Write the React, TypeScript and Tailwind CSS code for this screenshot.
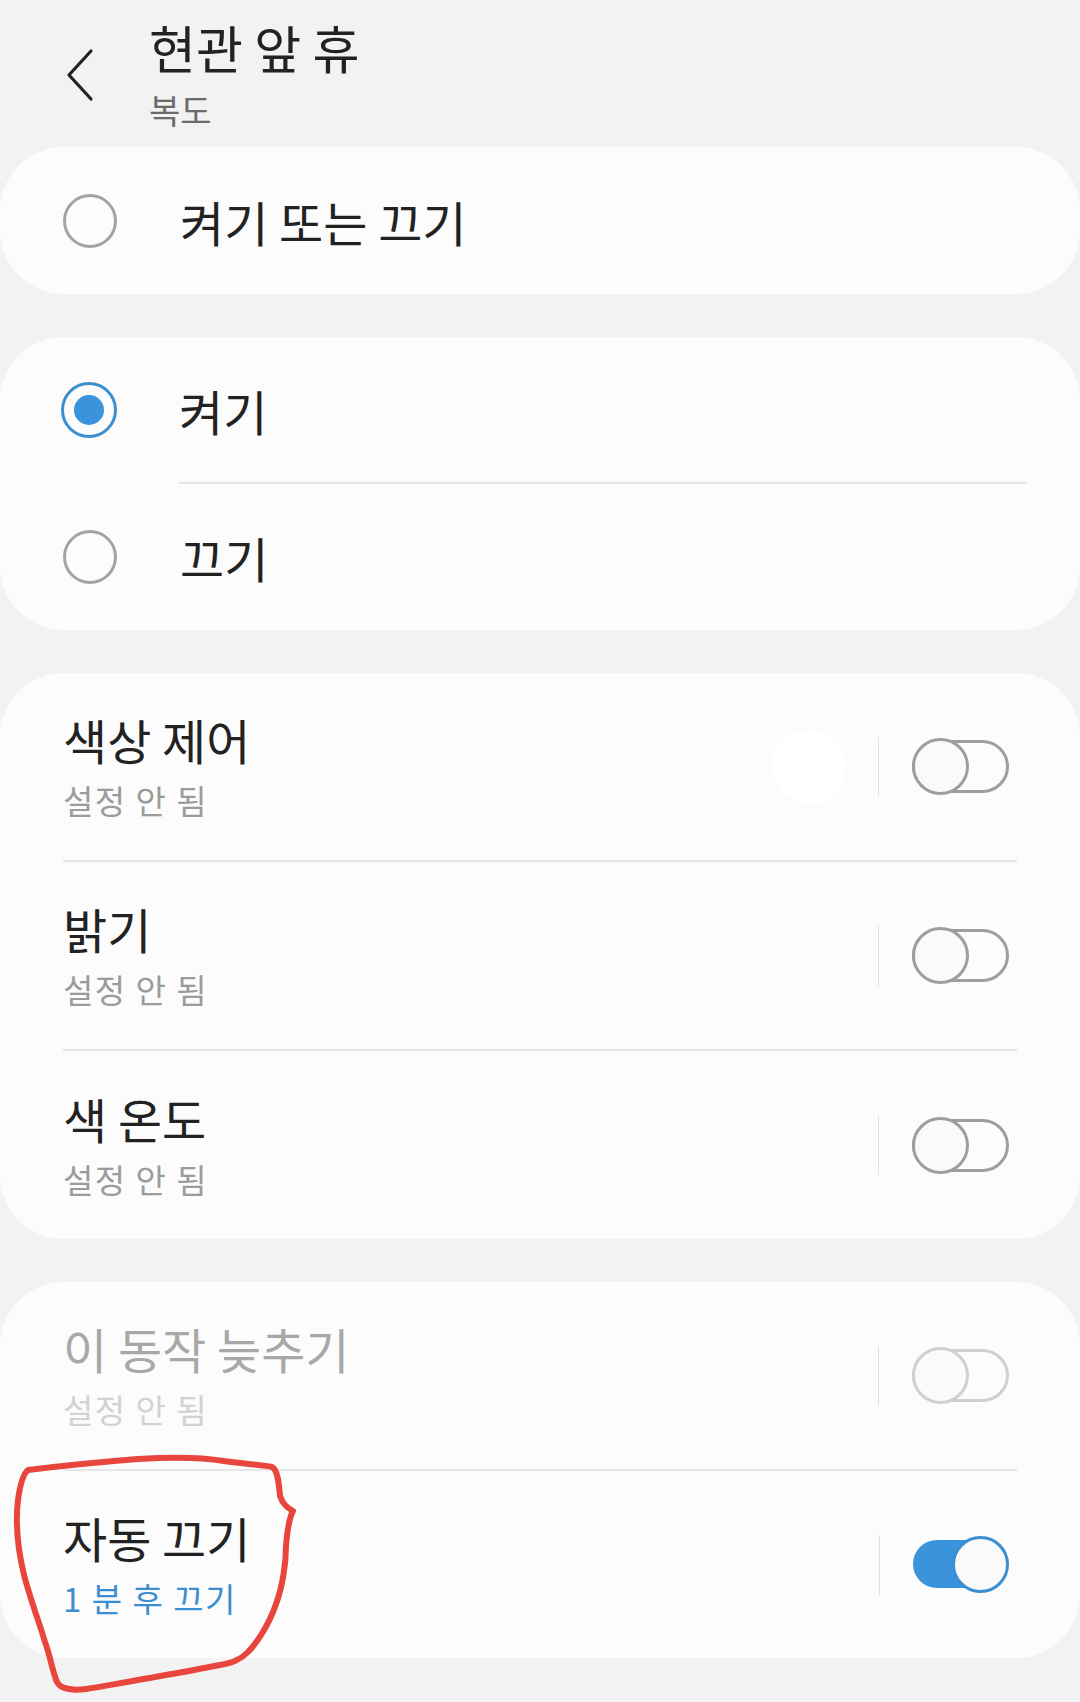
import React from "react";

const font = "font-['Noto_Sans_CJK_KR','Noto_Sans',sans-serif]";

type RadioProps = { checked?: boolean };

const Radio: React.FC<RadioProps> = ({ checked }) => {
  if (checked) {
    return (
      <div className="w-[56px] h-[56px] rounded-full border-[3px] border-[#3b8fd0] flex items-center justify-center shrink-0">
        <div className="w-[30px] h-[30px] rounded-full bg-[#3b93db]" />
      </div>
    );
  }
  return <div className="w-[54px] h-[54px] rounded-full border-[3px] border-[#a3a3a3] shrink-0 mx-[1px]" />;
};

type ToggleProps = { on?: boolean; disabled?: boolean };

const Toggle: React.FC<ToggleProps> = ({ on, disabled }) => {
  if (on) {
    return (
      <div className="relative w-[96px] h-[57px] shrink-0">
        <div className="absolute left-0 right-[8px] top-[4px] h-[48px] rounded-full bg-[#3b93db]" />
        <div className="absolute right-0 top-0 w-[57px] h-[57px] rounded-full border-[3px] border-[#3b8fd0] bg-[#fafafa]" />
      </div>
    );
  }
  const line = disabled ? "border-[#d0d0d0]" : "border-[#9e9e9e]";
  return (
    <div className="relative w-[97px] h-[57px] shrink-0">
      <div className={`absolute left-0 right-0 top-[2px] h-[53px] rounded-full border-[3px] ${line}`} />
      <div className={`absolute left-0 top-0 w-[57px] h-[57px] rounded-full border-[3px] bg-[#fafafa] ${line}`} />
    </div>
  );
};

type RowProps = {
  title: string;
  sub: string;
  on?: boolean;
  disabled?: boolean;
  ripple?: boolean;
  height: string;
};

const SwitchRow: React.FC<RowProps> = ({ title, sub, on, disabled, ripple, height }) => {
  const titleColor = disabled ? "text-[#a8a8a8]" : "text-[#222222]";
  const subColor = on ? "text-[#3b8fd0]" : disabled ? "text-[#d2d2d2]" : "text-[#9b9b9b]";
  return (
    <div className={`flex items-center pl-[63px] pr-[71px] ${height}`}>
      <div className="flex-1 flex flex-col gap-[15px]">
        <span className={`text-[48px] leading-[52px] ${titleColor}`}>{title}</span>
        <span className={`text-[33px] leading-[40px] tracking-[1.5px] ${subColor}`}>{sub}</span>
      </div>
      {ripple && <div className="w-[74px] h-[74px] rounded-full bg-white mr-[32px]" />}
      <div className="w-px h-[60px] bg-[#e2e2e2] mr-[33px]" />
      <Toggle on={on} disabled={disabled} />
    </div>
  );
};

const Divider: React.FC<{ className?: string }> = ({ className }) => (
  <div className={`h-[2px] bg-[#e6e6e6] ${className ?? ""}`} />
);

export default function App() {
  return (
    <div className={`relative w-[1080px] min-h-[1702px] bg-[#f2f2f2] ${font}`}>
      {/* header */}
      <div className="h-[147px] flex">
        <div className="w-[149px] pl-[64px] pt-[48px]">
          <svg width="32" height="54" viewBox="0 0 32 54" fill="none">
            <path d="M27 3 L5 27 L27 51" stroke="#222" strokeWidth="3.2" strokeLinecap="round" strokeLinejoin="round" />
          </svg>
        </div>
        <div className="flex flex-col pt-[19px]">
          <span className="text-[51px] leading-[56px] text-[#222222]">현관 앞 휴</span>
          <span className="text-[34px] leading-[40px] text-[#6b6b6b] mt-[15px]">복도</span>
        </div>
      </div>

      {/* card 1 */}
      <div className="h-[147px] bg-[#fcfcfc] rounded-[64px] flex items-center pl-[62px]">
        <Radio />
        <span className="ml-[62px] text-[48px] leading-[52px] text-[#222222]">켜기 또는 끄기</span>
      </div>

      {/* card 2 */}
      <div className="mt-[43px] h-[293px] bg-[#fcfcfc] rounded-[64px] flex flex-col">
        <div className="h-[145px] flex items-center pl-[61px]">
          <Radio checked />
          <span className="ml-[62px] text-[48px] leading-[52px] text-[#222222]">켜기</span>
        </div>
        <Divider className="ml-[179px] mr-[53px]" />
        <div className="h-[146px] flex items-center pl-[62px]">
          <Radio />
          <span className="ml-[62px] text-[48px] leading-[52px] text-[#222222]">끄기</span>
        </div>
      </div>

      {/* card 3 */}
      <div className="mt-[43px] bg-[#fcfcfc] rounded-[64px] flex flex-col">
        <SwitchRow title="색상 제어" sub="설정 안 됨" ripple height="h-[187px]" />
        <Divider className="ml-[63px] mr-[63px]" />
        <SwitchRow title="밝기" sub="설정 안 됨" height="h-[187px]" />
        <Divider className="ml-[63px] mr-[63px]" />
        <SwitchRow title="색 온도" sub="설정 안 됨" height="h-[188px]" />
      </div>

      {/* card 4 */}
      <div className="mt-[43px] bg-[#fcfcfc] rounded-[64px] flex flex-col">
        <SwitchRow title="이 동작 늦추기" sub="설정 안 됨" disabled height="h-[187px]" />
        <Divider className="ml-[63px] mr-[63px]" />
        <SwitchRow title="자동 끄기" sub="1 분 후 끄기" on height="h-[187px]" />
      </div>

      {/* hand-drawn annotation */}
      <svg
        className="absolute left-0 top-0 pointer-events-none"
        width="1080"
        height="1702"
        viewBox="0 0 1080 1702"
        fill="none"
      >
        <path
          d="M28 1470 C 60 1466, 100 1462, 138 1459 C 170 1457, 200 1457, 224 1461 C 245 1464, 262 1465, 272 1467 C 278 1470, 279 1485, 280 1496 C 283 1505, 288 1508, 293 1511 C 288 1520, 287 1535, 286 1546 C 286 1565, 282 1588, 276 1604 C 270 1622, 258 1642, 248 1652 C 240 1660, 232 1663, 220 1665 C 190 1671, 160 1676, 138 1680 C 115 1684, 100 1687, 86 1689 C 70 1691, 60 1688, 57 1682 C 52 1670, 50 1655, 45 1642 C 40 1625, 30 1598, 24 1575 C 18 1550, 15 1525, 18 1500 C 20 1485, 23 1474, 28 1470 Z"
          stroke="#e8453c"
          strokeWidth="6"
          strokeLinejoin="round"
          strokeLinecap="round"
        />
      </svg>
    </div>
  );
}
